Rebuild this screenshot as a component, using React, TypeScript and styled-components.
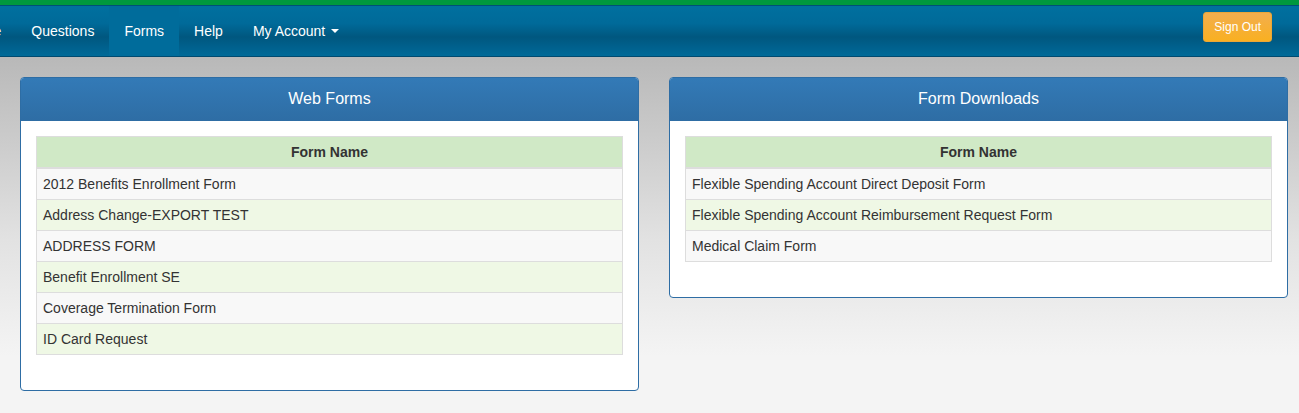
import React from 'react';
import styled, { createGlobalStyle } from 'styled-components';

const GlobalStyle = createGlobalStyle`
  html, body {
    margin: 0;
    padding: 0;
  }
  body {
    font-family: "Liberation Sans", Arial, Helvetica, sans-serif;
    font-size: 14px;
    line-height: 20px;
    color: #333;
    background: #f4f4f4;
    overflow: hidden;
  }
`;

const Page = styled.div`
  width: 1299px;
  height: 413px;
  display: flex;
  flex-direction: column;
  background: linear-gradient(to bottom, #b8b8b8 0px, #b9b9b9 60px, #e2e2e2 240px, #f4f4f4 356px);
`;

const TopStripe = styled.div`
  height: 5px;
  background: #00983e;
`;

const Navbar = styled.nav`
  height: 50px;
  display: flex;
  align-items: stretch;
  justify-content: space-between;
  border-top: 1px solid #004f78;
  border-bottom: 1px solid #004a70;
  background: linear-gradient(to bottom, #00709f 0%, #006a99 35%, #00577f 62%, #00628f 85%, #006a98 100%);
  flex-shrink: 0;
`;

const NavList = styled.ul`
  display: flex;
  list-style: none;
  margin: 0 0 0 -51px;
  padding: 0;
`;

const NavItem = styled.li<{ $active?: boolean }>`
  display: flex;
  align-items: center;
  padding: 0 15px;
  color: #fff;
  font-size: 14px;
  background: ${(p) => (p.$active ? '#006c9b' : 'transparent')};
  cursor: pointer;
  white-space: nowrap;
`;

const Caret = styled.span`
  display: inline-block;
  width: 0;
  height: 0;
  margin-left: 6px;
  border-top: 4px solid #fff;
  border-left: 4px solid transparent;
  border-right: 4px solid transparent;
  vertical-align: middle;
`;

const NavRight = styled.div`
  display: flex;
  align-items: flex-start;
  padding: 6px 27px 0 0;
`;

const SignOutButton = styled.button`
  height: 30px;
  padding: 0 10px;
  font-family: "Liberation Sans", Arial, sans-serif;
  font-size: 12px;
  color: #fff;
  border: 1px solid #eba637;
  border-radius: 3px;
  background: linear-gradient(to bottom, #f2ae4e 0%, #f9b021 100%);
  cursor: pointer;
`;

const Content = styled.main`
  display: grid;
  grid-template-columns: 619px 619px;
  column-gap: 30px;
  align-items: start;
  padding: 20px 0 0 20px;
`;

const Panel = styled.section`
  background: #fff;
  border: 1px solid #2e6da4;
  border-radius: 4px;
  overflow: hidden;
`;

const PanelHeading = styled.div`
  height: 42px;
  padding-bottom: 1px;
  display: flex;
  align-items: center;
  justify-content: center;
  color: #fff;
  font-size: 16px;
  background: linear-gradient(to bottom, #337ab7 0%, #2e6da4 100%);
`;

const PanelBody = styled.div`
  padding: 15px;
`;

const Table = styled.table`
  width: 100%;
  border-collapse: collapse;
  border: 1px solid #ddd;
  margin-bottom: 20px;
`;

const HeadCell = styled.th`
  height: 20px;
  padding: 5px;
  background: #d0e9c6;
  border-bottom: 2px solid #ddd;
  font-weight: bold;
  text-align: center;
  color: #333;
`;

const Row = styled.tr<{ $alt: boolean }>`
  background: ${(p) => (p.$alt ? '#eff8e5' : '#f8f8f8')};
`;

const Cell = styled.td`
  height: 20px;
  padding: 5px 6px;
  border-top: 1px solid #ddd;
  color: #333;
`;

const webForms = [
  '2012 Benefits Enrollment Form',
  'Address Change-EXPORT TEST',
  'ADDRESS FORM',
  'Benefit Enrollment SE',
  'Coverage Termination Form',
  'ID Card Request',
];

const downloads = [
  'Flexible Spending Account Direct Deposit Form',
  'Flexible Spending Account Reimbursement Request Form',
  'Medical Claim Form',
];

const FormPanel = ({ title, items }: { title: string; items: string[] }) => (
  <Panel>
    <PanelHeading>{title}</PanelHeading>
    <PanelBody>
      <Table>
        <thead>
          <tr>
            <HeadCell>Form Name</HeadCell>
          </tr>
        </thead>
        <tbody>
          {items.map((name, i) => (
            <Row key={name} $alt={i % 2 === 1}>
              <Cell>{name}</Cell>
            </Row>
          ))}
        </tbody>
      </Table>
    </PanelBody>
  </Panel>
);

const App = () => (
  <>
    <GlobalStyle />
    <Page>
      <TopStripe />
      <Navbar>
        <NavList>
          <NavItem>Home</NavItem>
          <NavItem>Questions</NavItem>
          <NavItem $active>Forms</NavItem>
          <NavItem>Help</NavItem>
          <NavItem>
            My Account
            <Caret />
          </NavItem>
        </NavList>
        <NavRight>
          <SignOutButton>Sign Out</SignOutButton>
        </NavRight>
      </Navbar>
      <Content>
        <FormPanel title="Web Forms" items={webForms} />
        <FormPanel title="Form Downloads" items={downloads} />
      </Content>
    </Page>
  </>
);

export default App;
